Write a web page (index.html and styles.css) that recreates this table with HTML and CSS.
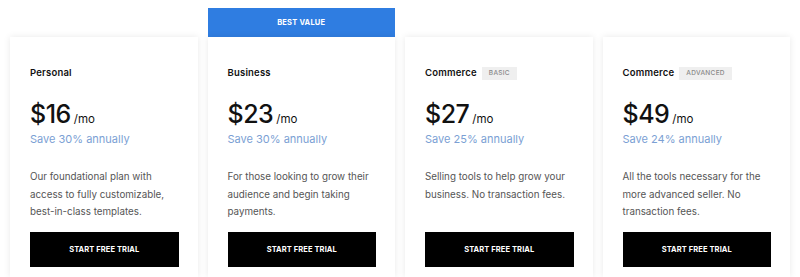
FILE: index.html
```html
<!DOCTYPE html>
<html>
<head>
<meta charset="utf-8">
<link rel="stylesheet" href="styles.css">
</head>
<body>
<div class="plans">
  <div class="col">
    <div class="card">
      <div class="title">Personal</div>
      <div class="price"><span class="amount">$16</span><span class="per">/mo</span></div>
      <div class="save">Save 30% annually</div>
      <p class="desc">Our foundational plan with access to fully customizable, best-in-class templates.</p>
      <div class="btn">START FREE TRIAL</div>
    </div>
  </div>
  <div class="col featured">
    <div class="banner">BEST VALUE</div>
    <div class="card">
      <div class="title">Business</div>
      <div class="price"><span class="amount">$23</span><span class="per">/mo</span></div>
      <div class="save">Save 30% annually</div>
      <p class="desc">For those looking to grow their audience and begin taking payments.</p>
      <div class="btn">START FREE TRIAL</div>
    </div>
  </div>
  <div class="col">
    <div class="card">
      <div class="title">Commerce <span class="tag">BASIC</span></div>
      <div class="price"><span class="amount">$27</span><span class="per">/mo</span></div>
      <div class="save">Save 25% annually</div>
      <p class="desc">Selling tools to help grow your business. No transaction fees.</p>
      <div class="btn">START FREE TRIAL</div>
    </div>
  </div>
  <div class="col">
    <div class="card">
      <div class="title">Commerce <span class="tag">ADVANCED</span></div>
      <div class="price"><span class="amount">$49</span><span class="per">/mo</span></div>
      <div class="save">Save 24% annually</div>
      <p class="desc">All the tools necessary for the more advanced seller. No transaction fees.</p>
      <div class="btn">START FREE TRIAL</div>
    </div>
  </div>
</div>
</body>
</html>
```

FILE: styles.css
```css
* { box-sizing: border-box; }
html, body { margin: 0; background: #ffffff; }
body {
  font-family: Inter, "Noto Sans", sans-serif;
  color: #111;
  overflow: hidden;
  height: 277px;
}
.plans {
  display: grid;
  grid-template-columns: repeat(4, 1fr);
  gap: 10px;
  padding: 8px 10px 0 10px;
}
.col {
  display: flex;
  flex-direction: column;
  padding-top: 29px;
}
.col.featured { padding-top: 0; }
.banner {
  height: 29px;
  background: #2f7de1;
  color: #fff;
  font-size: 7.5px;
  font-weight: 700;
  display: flex;
  align-items: center;
  justify-content: center;
  letter-spacing: 0.2px;
}
.card {
  background: #fff;
  box-shadow: 0 0 7px rgba(0,0,0,0.09);
  padding: 28px 19px 0 20px;
  height: 240px;
}
.title {
  font-size: 9.5px;
  font-weight: 600;
  line-height: 16px;
  height: 16px;
  display: flex;
  align-items: center;
  gap: 5px;
  letter-spacing: 0.2px;
}
.tag {
  background: #efefef;
  color: #888;
  font-size: 6.5px;
  font-weight: 500;
  padding: 0 7px;
  height: 13px;
  line-height: 13px;
  letter-spacing: 0.3px;
}
.price {
  margin-top: 21px;
  display: flex;
  align-items: baseline;
  gap: 3px;
  line-height: 24px;
}
.amount {
  font-size: 25px;
  font-weight: 500;
  letter-spacing: -0.5px;
}
.per {
  font-size: 11.5px;
  font-weight: 400;
}
.save {
  font-size: 11px;
  color: #7b9fd4;
  line-height: 16px;
}
.desc {
  margin: 21px 0 0 0;
  font-size: 9.8px;
  line-height: 17.5px;
  color: #555;
  height: 52px;
}
.btn {
  margin-top: 12px;
  height: 35px;
  background: #000;
  color: #fff;
  font-size: 7.5px;
  font-weight: 700;
  display: flex;
  align-items: center;
  justify-content: center;
  letter-spacing: 0.1px;
}
```
